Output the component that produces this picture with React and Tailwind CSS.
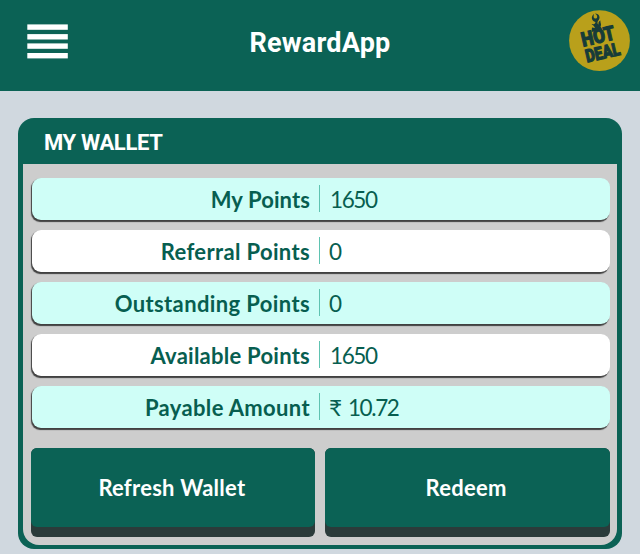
import React from "react";

const walletRows = [
  { label: "My Points",          value: "1650",    tint: true,  labelClass: "tracking-[0.1px]",  valueClass: "pl-[10px] tracking-[-1.4px]" },
  { label: "Referral Points",    value: "0",       tint: false, labelClass: "tracking-[0.35px]", valueClass: "pl-[9px]" },
  { label: "Outstanding Points", value: "0",       tint: true,  labelClass: "tracking-[0.38px]", valueClass: "pl-[9px]" },
  { label: "Available Points",   value: "1650",    tint: false, labelClass: "tracking-[0.25px]", valueClass: "pl-[10px] tracking-[-1.4px]" },
  { label: "Payable Amount",     value: "₹ 10.72", tint: true,  labelClass: "tracking-[0.35px]", valueClass: "pl-[9px] tracking-[-1.4px] [word-spacing:3px]" },
];

function MenuIcon() {
  return (
    <svg width="41" height="35" viewBox="0 0 41 35" fill="#fff" aria-label="Menu">
      <rect x="0.3" y="0.4" width="40.5" height="5.4" />
      <rect x="0.3" y="10.1" width="40.5" height="5.4" />
      <rect x="0.3" y="19.4" width="40.5" height="5.4" />
      <rect x="0.3" y="29" width="40.5" height="5.4" />
    </svg>
  );
}

function HotDealBadge() {
  return (
    <svg width="62" height="62" viewBox="0 0 62 62" className="overflow-visible" aria-label="Hot deal">
      <circle cx="30.5" cy="30.7" r="30.4" fill="#b9a01b" />
      {/* Flame */}
      <path
        d="M22.5 22 L23 17.5 L26 18 C25.5 16.5 24.5 15 22.5 14.5 C24.5 14 26 14.5 26.5 12 C22.5 11 21.5 6.5 25 4 C24 7.5 25 9 27 8.5 C29 8 28.5 5 26 3.5 C30.5 3.5 32 8 29 11 C28 12.5 28.5 14 29.5 14.5 C29 12.5 30 11 31.5 10.5 C31 13 33 14 31.5 16.5 L33 19 L32 20 Z"
        fill="#173c39"
      />
      <g
        fill="#173c39"
        stroke="#173c39"
        strokeWidth="1.1"
        fontFamily="Roboto, 'Liberation Sans', sans-serif"
        fontWeight="900"
      >
        <text transform="translate(14 36.8) rotate(-13)" fontSize="20" textLength="34" lengthAdjust="spacingAndGlyphs">HOT</text>
        <text transform="translate(18 52.5) rotate(-13)" fontSize="18" textLength="35" lengthAdjust="spacingAndGlyphs">DEAL</text>
      </g>
    </svg>
  );
}

function WalletRow({ label, value, tint, labelClass, valueClass }) {
  return (
    <div
      className={`h-[42.5px] flex items-center rounded-[9px] text-[22px] leading-none text-[#075e50] shadow-[-1px_1.5px_1px_#414141]
        ${tint ? "bg-[#cffef7]" : "bg-white"}`}
    >
      <span className={`w-[278.5px] pt-[2px] text-right font-bold whitespace-nowrap ${labelClass}`}>{label}</span>
      <span className="w-px h-[27px] ml-[9px] bg-[#5fc3b1]" />
      <span className={`pt-[2px] text-[22.5px] whitespace-nowrap ${valueClass}`}>{value}</span>
    </div>
  );
}

function WalletButton({ children }) {
  return (
    <button className="flex-1 h-[89px] rounded-[6px] bg-[#2b3b3a] flex flex-col text-white text-[22px] font-bold tracking-[0.25px]">
      <span className="w-full h-[79px] pt-px pr-[2px] flex items-center justify-center rounded-[6px] bg-[#0b6255]">
        {children}
      </span>
    </button>
  );
}

export default function App() {
  return (
    <div className="w-full h-[554px] overflow-hidden bg-[#d0d8df] font-[Lato,'Noto_Sans',sans-serif]">
      {/* Top bar */}
      <header className="h-[91px] flex items-center justify-between pl-[27px] pr-[9px] pb-[9px] bg-[#0b6255]">
        <div className="w-[62px]">
          <MenuIcon />
        </div>
        <h1 className="pt-[3px] pr-[18px] text-[27px] leading-8 font-bold tracking-[0.2px] text-white font-[Roboto,sans-serif]">RewardApp</h1>
        <HotDealBadge />
      </header>

      {/* Wallet card */}
      <section className="mt-[27px] mx-[18px] h-[431px] rounded-[16px] bg-[#0b6255] px-[5px] pb-[4px] flex flex-col">
        <h2 className="h-[46px] pt-[3px] pl-[21px] flex items-center text-[22px] font-bold tracking-[-0.35px] text-white font-[Roboto,sans-serif]">
          MY WALLET
        </h2>
        <div className="flex-1 bg-[#cdcdcd] rounded-b-[16px] pt-[13.5px] px-[7.5px]">
          <div className="flex flex-col gap-[9.5px] pl-[1px]">
            {walletRows.map((row) => (
              <WalletRow key={row.label} {...row} />
            ))}
          </div>
          <div className="flex gap-[9.5px] mt-[19.5px]">
            <WalletButton>Refresh Wallet</WalletButton>
            <WalletButton>Redeem</WalletButton>
          </div>
        </div>
      </section>
    </div>
  );
}
